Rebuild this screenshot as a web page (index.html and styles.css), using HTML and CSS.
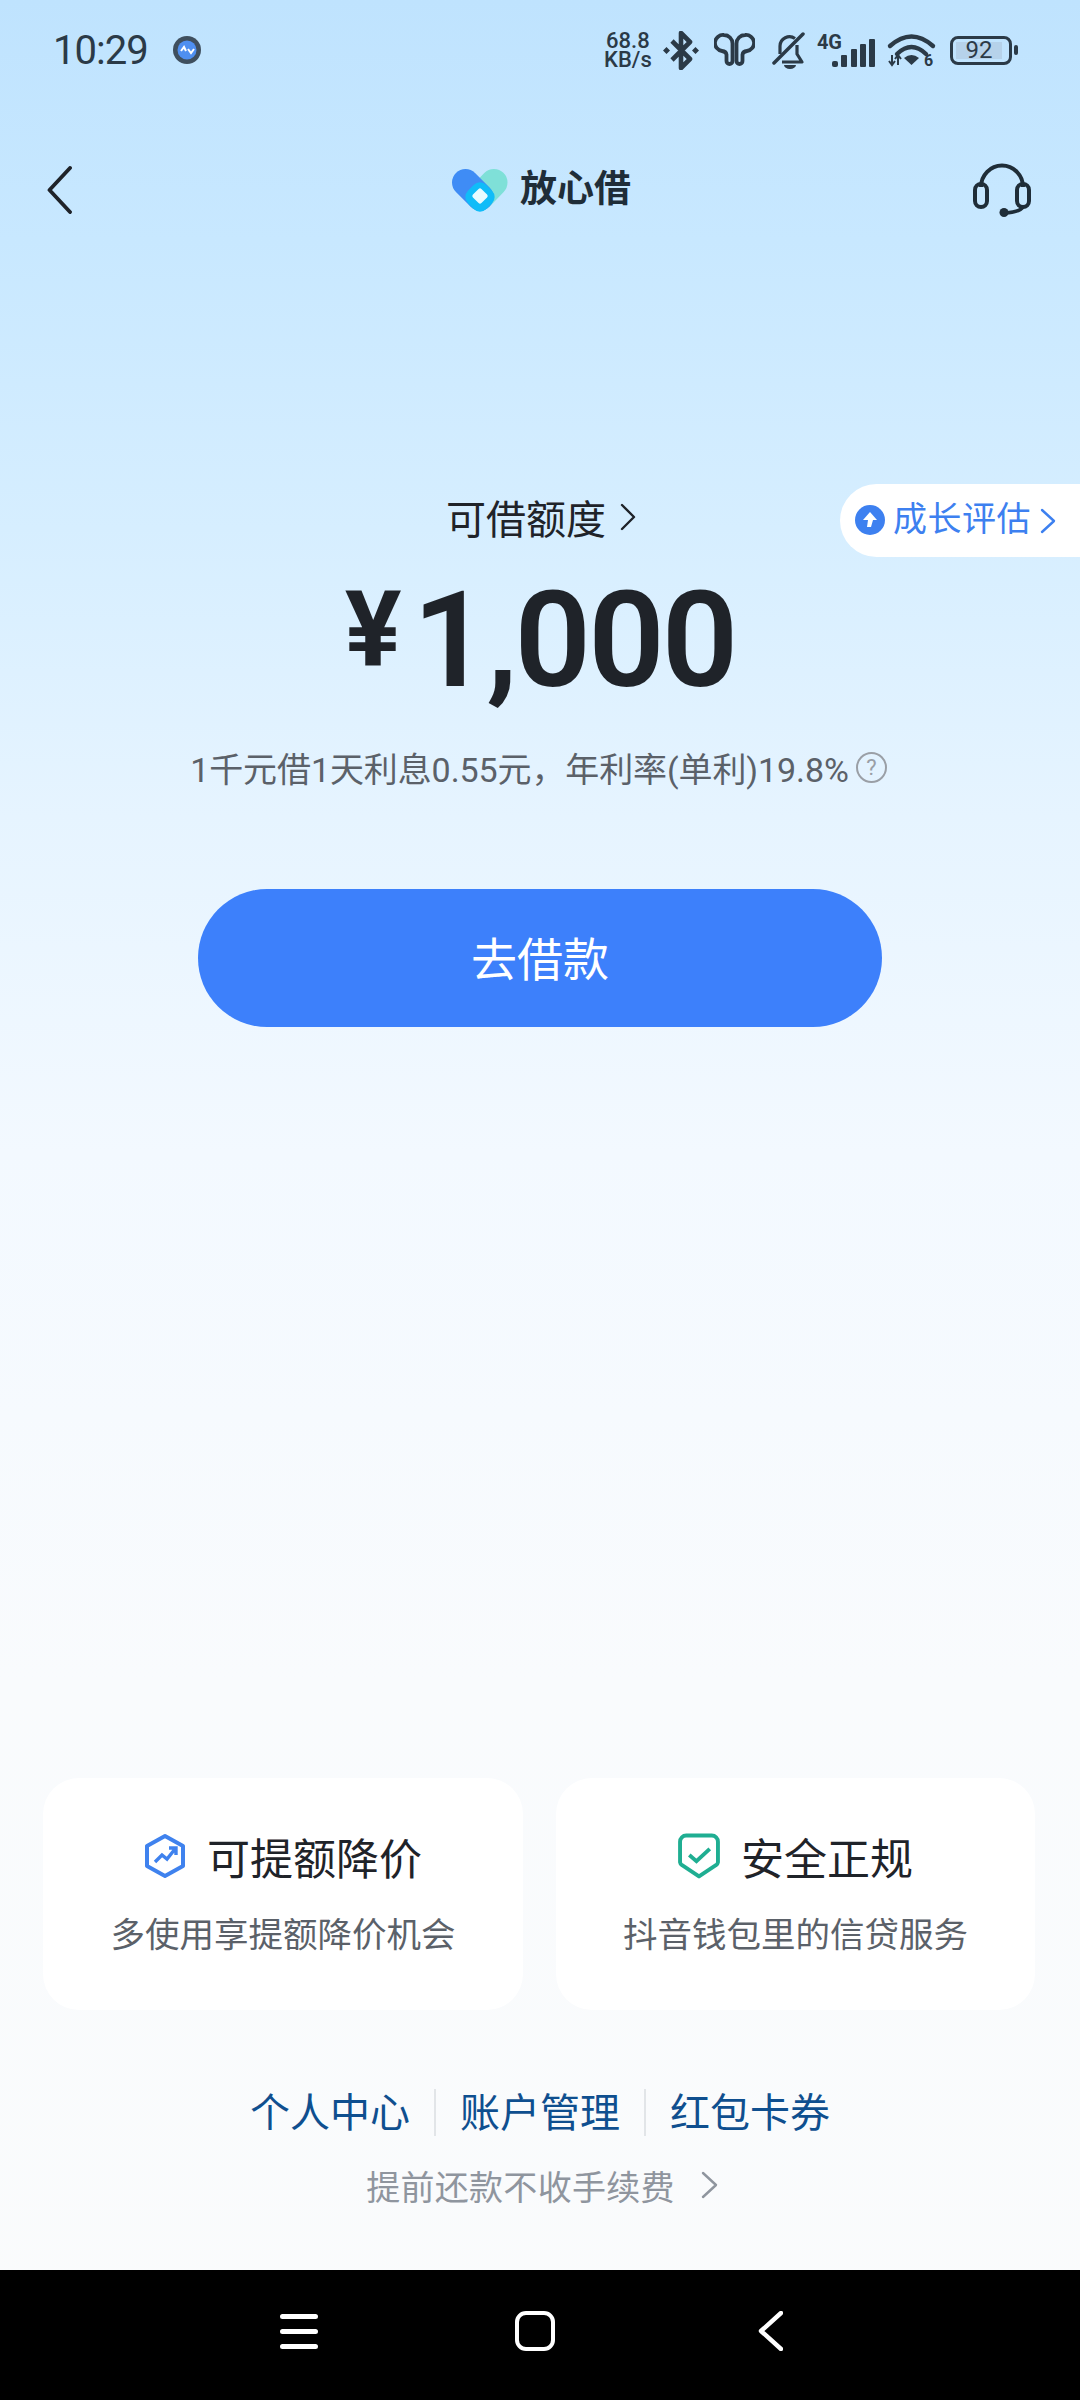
FILE: index.html
```html
<html>
<head>
<title>放心借</title>
<link rel="stylesheet" href="styles.css">
</head>
<body>
<div class="page">

  <div class="status">
    <div class="status-left">
      <span class="time">10:29</span>
      <svg class="ic-app" viewBox="0 0 28 28">
        <circle cx="14" cy="14" r="14" fill="#3f4f5e"/>
        <circle cx="14" cy="14" r="9.5" fill="#4f8ff0"/>
        <path d="M8 15l3-4 2 4M15 13l3 4 3-4" fill="none" stroke="#fff" stroke-width="2"/>
      </svg>
    </div>
    <div class="status-right">
      <div class="speed">68.8<br>KB/s</div>
      <svg class="ic-bt" viewBox="0 0 36 39">
        <path d="M9 10l18 18-9 9V2l9 9L9 29" fill="none" stroke="#2b3a47" stroke-width="4.600" stroke-linejoin="round"/>
        <path d="M3.500 16l3.500 3.500-3.500 3.500L0 19.500zM32.500 16l3.500 3.500-3.500 3.500-3.500-3.500z" fill="#2b3a47"/>
      </svg>
      <svg class="ic-buds" viewBox="0 0 41 34">
        <path d="M10 2a8 8 0 0 0-2 16q4 .5 4.500 3.500V28a3 3 0 0 0 6 0V10.500A8.500 8.500 0 0 0 10 2z" fill="none" stroke="#2b3a47" stroke-width="3.800"/>
        <path d="M31 2a8 8 0 0 1 2 16q-4 .5-4.500 3.500V28a3 3 0 0 1-6 0V10.500A8.500 8.500 0 0 1 31 2z" fill="none" stroke="#2b3a47" stroke-width="3.800"/>
      </svg>
      <svg class="ic-bell" viewBox="0 0 33 37">
        <path d="M2 31L31 2" fill="none" stroke="#2b3a47" stroke-width="3.500" stroke-linecap="round"/>
        <path d="M8 22V14a9.500 9.500 0 0 1 15-7.500M25 13v9l5 8H10" fill="none" stroke="#2b3a47" stroke-width="3.200" stroke-linejoin="round"/>
        <path d="M12 33h12a6 4 0 0 1-12 0z" fill="#2b3a47"/>
      </svg>
      <div class="signal">
        <span class="tag-4g">4G</span>
        <svg class="ic-bars" viewBox="0 0 43 28">
          <rect x="0" y="22" width="6" height="6" rx="2" fill="#2b3a47"/>
          <rect x="9" y="16" width="6" height="12" rx="1" fill="#2b3a47"/>
          <rect x="19" y="10" width="6" height="18" rx="1" fill="#2b3a47"/>
          <rect x="28" y="5" width="6" height="23" rx="1" fill="#2b3a47"/>
          <rect x="37" y="0" width="6" height="28" rx="1" fill="#2b3a47"/>
        </svg>
      </div>
      <svg class="ic-wifi" viewBox="0 0 47 34">
        <path d="M2 13Q23.500-6 45 13M9 21Q23.500 7 38 21" fill="none" stroke="#2b3a47" stroke-width="4.400" stroke-linecap="round"/>
        <path d="M16 25q7.500-6 15 0l-7.500 7z" fill="#2b3a47"/>
        <path d="M4 22v10M1 28l3 4 3-4M10 32V22M7 26l3-4 3 4" fill="none" stroke="#2b3a47" stroke-width="2"/>
        <text x="36" y="33" class="wifi-six">6</text>
      </svg>
      <div class="battery">
        <div class="battery-body"><div class="battery-fill">92</div></div>
        <div class="battery-cap"></div>
      </div>
    </div>
  </div>

  <div class="topbar">
    <svg class="ic-back" viewBox="0 0 25 48">
      <path d="M23 2L2.500 24 23 46" fill="none" stroke="#1f2329" stroke-width="3.800" stroke-linecap="round" stroke-linejoin="round"/>
    </svg>
    <div class="brand">
      <svg class="ic-logo" viewBox="0 0 56 43">
        <path d="M42 13.500L28 28" fill="none" stroke="#7fe0d8" stroke-width="27" stroke-linecap="round"/>
        <path d="M13.500 13.500L28 28" fill="none" stroke="#3f8cf5" stroke-width="27" stroke-linecap="round"/>
        <rect x="15" y="15" width="26" height="26" rx="9" transform="rotate(45 28 28)" fill="#10bcf8"/>
        <rect x="22" y="21" width="12" height="12" rx="2" transform="rotate(45 28 27)" fill="#e8fbff"/>
      </svg>
      <span class="brand-name">放心借</span>
    </div>
    <svg class="ic-headset" viewBox="0 0 58 54">
      <path d="M8 24a21 21.500 0 0 1 42 0" fill="none" stroke="#1f2d38" stroke-width="4"/>
      <rect x="2" y="21" width="12" height="23" rx="6" fill="none" stroke="#1f2d38" stroke-width="4"/>
      <rect x="44" y="21" width="12" height="23" rx="6" fill="none" stroke="#1f2d38" stroke-width="4"/>
      <path d="M50 44q-3 5-18 6" fill="none" stroke="#1f2d38" stroke-width="3.500"/>
      <circle cx="31" cy="49.500" r="4.500" fill="#1f2d38"/>
    </svg>
  </div>

  <div class="hero">
    <div class="pill">
      <svg class="ic-up" viewBox="0 0 30 30">
        <circle cx="15" cy="15" r="15" fill="#3d80f0"/>
        <path d="M15 7l7 8h-4l-2 7h-4l1-7H8z" fill="#fff"/>
      </svg>
      <span class="pill-text">成长评估</span>
      <svg class="chev chev-pill" viewBox="0 0 16 26">
        <path d="M2 2l12 11L2 24" fill="none" stroke="#3d80f0" stroke-width="2.400" stroke-linecap="round" stroke-linejoin="round"/>
      </svg>
    </div>
    <div class="limit-title">
      <span>可借额度</span>
      <svg class="chev chev-title" viewBox="0 0 16 28">
        <path d="M2 2l12 12L2 26" fill="none" stroke="#1f2329" stroke-width="2.400" stroke-linecap="round" stroke-linejoin="round"/>
      </svg>
    </div>
    <div class="amount"><span class="yen">¥</span>1,000</div>
    <div class="rate">
      <span>1千元借1天利息0.55元，年利率(单利)19.8%</span>
      <span class="help">?</span>
    </div>
    <div class="cta">去借款</div>
  </div>

  <div class="bottom">
    <div class="cards">
      <div class="card">
        <div class="card-title">
          <svg class="ic-card" viewBox="0 0 42 46">
            <path d="M21 3l18 10v20L21 43 3 33V13z" fill="none" stroke="#3f82ee" stroke-width="4" stroke-linejoin="round"/>
            <path d="M11 29l7-7 5 4 8-10M25 15h7v7" fill="none" stroke="#3f82ee" stroke-width="3.400"/>
          </svg>
          <span>可提额降价</span>
        </div>
        <div class="card-sub">多使用享提额降价机会</div>
      </div>
      <div class="card">
        <div class="card-title">
          <svg class="ic-card" viewBox="0 0 41 44">
            <path d="M8 2h25a6 6 0 0 1 6 6v20a4 4 0 0 1-2 3L20.500 42 4 31a4 4 0 0 1-2-3V8a6 6 0 0 1 6-6z" fill="none" stroke="#1fae92" stroke-width="3.800" stroke-linejoin="round"/>
            <path d="M11 21l7 6 13-12" fill="none" stroke="#1fae92" stroke-width="3.800"/>
          </svg>
          <span>安全正规</span>
        </div>
        <div class="card-sub">抖音钱包里的信贷服务</div>
      </div>
    </div>
    <div class="links">
      <span class="link">个人中心</span>
      <span class="link">账户管理</span>
      <span class="link">红包卡券</span>
    </div>
    <div class="repay">
      <span>提前还款不收手续费</span>
      <svg class="chev chev-repay" viewBox="0 0 17 28">
        <path d="M2 2l13 12L2 26" fill="none" stroke="#8f959e" stroke-width="2.400" stroke-linecap="round" stroke-linejoin="round"/>
      </svg>
    </div>
  </div>

  <div class="navbar">
    <svg class="nav-menu" viewBox="0 0 38 35">
      <path d="M2.500 2.500h33M2.500 17.500h33M2.500 32.500h33" fill="none" stroke="#fff" stroke-width="5" stroke-linecap="round"/>
    </svg>
    <svg class="nav-home" viewBox="0 0 40 40">
      <rect x="2" y="2" width="36" height="36" rx="9" fill="none" stroke="#fff" stroke-width="4"/>
    </svg>
    <svg class="nav-back" viewBox="0 0 25 40">
      <path d="M23 2L3 20l20 18" fill="none" stroke="#fff" stroke-width="4.400" stroke-linecap="round" stroke-linejoin="round"/>
    </svg>
  </div>

</div>
</body>
</html>
```

FILE: styles.css
```css
body {
  margin: 0;
  font-family: Roboto, "Noto Sans CJK SC", sans-serif;
}

.page {
  width: 1080px;
  height: 2400px;
  display: flex;
  flex-direction: column;
  background: linear-gradient(180deg, #bfe3fe 0%, #c8e8ff 10%, #d6eeff 22%, #e6f4ff 34%, #f3f9ff 48%, #f9fbfd 70%, #fafbfc 100%);
}

/* status bar */
.status {
  height: 100px;
  display: flex;
  align-items: center;
  justify-content: space-between;
  padding: 0 62px 0 53px;
  color: #2b3a47;
}
.status-left {
  display: flex;
  align-items: center;
  gap: 25px;
}
.time {
  font-size: 40px;
  letter-spacing: -1px;
}
.ic-app {
  width: 28px;
  height: 28px;
}
.status-right {
  display: flex;
  align-items: center;
}
.speed {
  width: 48px;
  font-size: 22px;
  line-height: 19px;
  font-weight: 500;
  text-align: center;
  white-space: nowrap;
  margin-right: 11px;
}
.ic-bt {
  width: 36px;
  height: 39px;
  margin-right: 15px;
}
.ic-buds {
  width: 41px;
  height: 34px;
  margin-right: 17px;
}
.ic-bell {
  width: 33px;
  height: 37px;
  margin-right: 12px;
}
.signal {
  display: flex;
  align-items: flex-end;
  height: 34px;
  margin-right: 13px;
}
.tag-4g {
  align-self: flex-start;
  font-size: 20px;
  line-height: 18px;
  font-weight: 700;
  margin-right: -10px;
}
.ic-bars {
  width: 43px;
  height: 28px;
}
.ic-wifi {
  width: 47px;
  height: 34px;
  margin-right: 15px;
  overflow: visible;
}
.wifi-six {
  font-size: 16px;
  font-weight: 700;
  fill: #2b3a47;
}
.battery {
  display: flex;
  align-items: center;
  gap: 2px;
}
.battery-body {
  width: 62px;
  height: 29px;
  box-sizing: border-box;
  border: 3px solid #2b3a47;
  border-radius: 8px;
  padding: 3px;
}
.battery-fill {
  width: 46px;
  height: 17px;
  background: #b6d2ea;
  font-size: 24px;
  line-height: 17px;
  text-align: center;
}
.battery-cap {
  width: 4px;
  height: 10px;
  background: #2b3a47;
  border-radius: 2px;
}

/* title bar */
.topbar {
  height: 180px;
  display: flex;
  align-items: center;
  justify-content: space-between;
  padding: 0 49px 0 47px;
}
.ic-back {
  width: 25px;
  height: 48px;
}
.brand {
  display: flex;
  align-items: center;
  gap: 12px;
  margin-left: 38px;
}
.ic-logo {
  width: 56px;
  height: 43px;
}
.brand-name {
  font-size: 37px;
  font-weight: 700;
  line-height: 46px;
  color: #1f2d38;
}
.ic-headset {
  width: 58px;
  height: 54px;
}

/* limit + button */
.hero {
  position: relative;
  display: flex;
  flex-direction: column;
  align-items: center;
  padding-top: 207px;
}
.pill {
  position: absolute;
  top: 204px;
  right: 0;
  width: 240px;
  height: 73px;
  box-sizing: border-box;
  padding: 0 0 0 15px;
  display: flex;
  align-items: center;
  background: #fff;
  border-radius: 37px 0 0 37px;
}
.ic-up {
  width: 30px;
  height: 30px;
  margin: -2px 8px 0 0;
}
.pill-text {
  font-size: 34px;
  letter-spacing: 0.5px;
  line-height: 40px;
  margin-top: -3px;
  color: #3d80f0;
}
.chev-pill {
  width: 16px;
  height: 26px;
  margin-left: 9px;
}
.limit-title {
  height: 60px;
  display: flex;
  align-items: center;
  gap: 14px;
  font-size: 40px;
  color: #1f2329;
  padding-left: 2px;
}
.chev-title {
  width: 16px;
  height: 28px;
}
.amount {
  margin-top: 13px;
  height: 140px;
  line-height: 140px;
  font-size: 134px;
  font-weight: 600;
  color: #1f2329;
  letter-spacing: -3px;
}
.yen {
  font-size: 106px;
  font-weight: 700;
  vertical-align: 20px;
  margin-right: 14px;
}
.rate {
  margin-top: 42px;
  height: 50px;
  padding-right: 3px;
  display: flex;
  align-items: center;
  gap: 7px;
  font-size: 34px;
  letter-spacing: -0.1px;
  color: #5b6169;
}
.help {
  width: 27px;
  height: 27px;
  border: 2px solid #9a9fa6;
  border-radius: 50%;
  font-size: 22px;
  line-height: 27px;
  text-align: center;
  color: #9a9fa6;
}
.cta {
  margin-top: 97px;
  width: 684px;
  height: 138px;
  border-radius: 69px;
  background: #3d80fb;
  color: #fff;
  font-size: 46px;
  line-height: 142px;
  text-align: center;
}

/* cards + links */
.bottom {
  margin-top: auto;
}
.cards {
  display: grid;
  grid-template-columns: 480px 479px;
  gap: 33px;
  padding: 0 45px 0 43px;
}
.card {
  height: 232px;
  background: #fff;
  border-radius: 36px;
  display: flex;
  flex-direction: column;
  align-items: center;
  padding-top: 50px;
  box-sizing: border-box;
}
.card-title {
  display: flex;
  align-items: center;
  gap: 21px;
  height: 56px;
  font-size: 43px;
  color: #1f2329;
}
.ic-card {
  width: 42px;
  height: 46px;
}
.card-sub {
  margin-top: 27px;
  font-size: 34.500px;
  line-height: 48px;
  color: #5b6169;
}
.links {
  margin-top: 79px;
  display: flex;
  justify-content: center;
  height: 47px;
}
.link {
  width: 160px;
  padding: 0 24px;
  font-size: 40px;
  line-height: 49px;
  text-align: center;
  color: #0f4f8f;
  border-left: 2px solid #e2e5e8;
}
.link:first-child {
  border-left: 0;
}
.repay {
  margin-top: 24px;
  height: 50px;
  padding-left: 4px;
  display: flex;
  align-items: center;
  justify-content: center;
  gap: 26px;
  font-size: 34px;
  letter-spacing: 0.3px;
  color: #8f959e;
}
.chev-repay {
  width: 17px;
  height: 28px;
}

/* system nav */
.navbar {
  margin-top: 60px;
  height: 130px;
  box-sizing: border-box;
  padding: 0 0 8px 280px;
  background: #000;
  display: flex;
  align-items: center;
}
.nav-menu {
  width: 38px;
  height: 35px;
}
.nav-home {
  width: 40px;
  height: 40px;
  margin-left: 197px;
}
.nav-back {
  width: 25px;
  height: 40px;
  margin-left: 203px;
}
```
